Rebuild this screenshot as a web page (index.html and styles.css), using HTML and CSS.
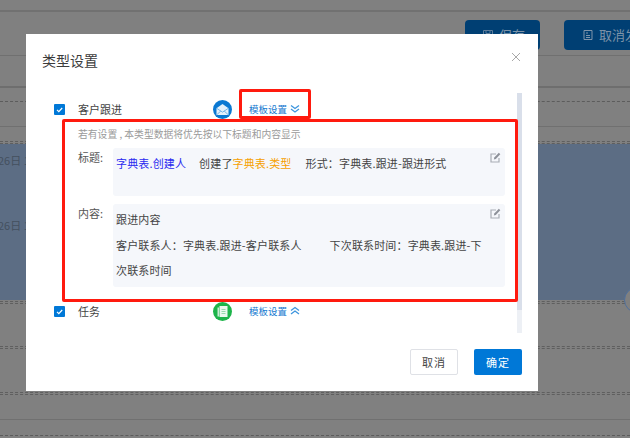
FILE: index.html
```html
<!DOCTYPE html>
<html lang="zh">
<head>
<meta charset="utf-8">
<title>类型设置</title>
<link rel="stylesheet" href="styles.css">
</head>
<body>
<div class="page">
  <div class="bg-row r1"></div>
  <div class="bg-row r2">
    <div class="bg-btn b1"><svg class="bg-ico" viewBox="0 0 12 12"><path d="M1.500 1.500h9v9h-9zM4 1.500v3h4v-3" fill="none" stroke="#5f7d9a" stroke-width="1"/></svg><span>保存</span></div>
    <div class="bg-btn b2"><svg class="bg-ico" viewBox="0 0 12 12"><path d="M2 1.500h8v9H2zM4 4h2M4 6.500h4M4 8.500h4" fill="none" stroke="#7f95ab" stroke-width="1"/></svg><span>取消发布</span></div>
  </div>
  <div class="bg-row r3"></div>
  <div class="bg-row r4"></div>
  <div class="bg-row r5"></div>
  <div class="bg-row r6"></div>
  <div class="dbl"></div>
  <div class="band">
    <div class="band-date d1">26日 1</div>
    <div class="band-date d2">26日 1</div>
    <div class="band-round"></div>
  </div>
  <div class="dbl after-band"></div>
  <div class="gap g42"></div>
  <div class="dbl"></div>
  <div class="gap g43"></div>
  <div class="dbl"></div>
  <div class="bg-row r9"></div>
  <div class="bg-row r10"></div>

  <div class="modal">
    <header class="modal-head">
      <h1 class="modal-title">类型设置</h1>
      <svg class="close" viewBox="0 0 10 10"><path d="M1 1l8 8M9 1l-8 8" stroke="#a9a9a9" stroke-width="1" fill="none"/></svg>
    </header>
    <div class="scroll">
      <div class="type-row first">
        <span class="check"><svg viewBox="0 0 11 11"><path d="M3 5.800l1.800 1.800L8.200 4" fill="none" stroke="#fff" stroke-width="1.200"/></svg></span>
        <span class="type-name">客户跟进</span>
        <span class="badge blue"><svg viewBox="0 0 19 19"><path d="M3.500 8.200L9.500 4 15.500 8.200V15h-12z" fill="#e3f0fb"/><path d="M3.500 8.200l6 4 6-4M3.500 15l4.300-4M15.500 15l-4.300-4" fill="none" stroke="#5aa6e3" stroke-width=".8"/></svg></span>
        <a class="tpl-link">模板设置<svg viewBox="0 0 10 10"><path d="M1 1.500l4 3 4-3M1 5l4 3 4-3" fill="none" stroke="#3d95de" stroke-width="1.300"/></svg></a>
      </div>
      <div class="panel">
        <p class="hint">若有设置 , 本类型数据将优先按以下标题和内容显示</p>
        <div class="field">
          <span class="field-label">标题:</span>
          <div class="field-box title-box">
            <span class="v-blue">字典表.创建人</span><span class="gap1">创建了</span><span class="v-orange">字典表.类型</span><span class="gap2">形式<span class="colon">：</span>字典表.跟进-跟进形式</span>
            <svg class="edit" viewBox="0 0 11 11"><path d="M9 6v4H1V2h5" fill="none" stroke="#a9adb5" stroke-width="1.200"/><path d="M3.800 7.500l.5-2L8.800.8l1.500 1.500-4.500 4.700z" fill="#8e929a"/></svg>
          </div>
        </div>
        <div class="field">
          <span class="field-label">内容:</span>
          <div class="field-box content-box">
            <div>跟进内容</div>
            <div>客户联系人<span class="colon">：</span>字典表.跟进-客户联系人<span class="gap3">下次联系时间<span class="colon">：</span>字典表.跟进-下次联系时间</span></div>
            <svg class="edit" viewBox="0 0 11 11"><path d="M9 6v4H1V2h5" fill="none" stroke="#a9adb5" stroke-width="1.200"/><path d="M3.800 7.500l.5-2L8.800.8l1.500 1.500-4.500 4.700z" fill="#8e929a"/></svg>
          </div>
        </div>
      </div>
      <div class="type-row second">
        <span class="check"><svg viewBox="0 0 11 11"><path d="M3 5.800l1.800 1.800L8.200 4" fill="none" stroke="#fff" stroke-width="1.200"/></svg></span>
        <span class="type-name">任务</span>
        <span class="badge green"><svg viewBox="0 0 19 19"><path d="M4.500 5.500h1.500v9H4.500z" fill="#c9ecd3"/><path d="M6.500 4h8v11h-8z" fill="#eaf8ee"/><path d="M8.500 7.500h4M8.500 9.500h4M8.500 11.500h4" stroke="#7fd39a" stroke-width=".8"/></svg></span>
        <a class="tpl-link">模板设置<svg viewBox="0 0 10 10"><path d="M1 4.500l4-3 4 3M1 8l4-3 4 3" fill="none" stroke="#3d95de" stroke-width="1.300"/></svg></a>
      </div>
      <div class="scrollbar"><div class="thumb"></div></div>
    </div>
    <footer class="modal-foot">
      <button class="btn cancel">取消</button>
      <button class="btn ok">确定</button>
    </footer>
  </div>

  <div class="mark mark-link"></div>
  <div class="mark mark-panel"></div>
</div>
</body>
</html>
```
FILE: styles.css
```css
* { box-sizing: border-box; }
html, body { margin: 0; padding: 0; }
body {
  width: 630px; height: 438px; overflow: hidden;
  font-family: "Noto Sans CJK SC", "Noto Sans", sans-serif;
  font-size: 11px; color: #444; background: #808080;
}
.page { position: relative; width: 630px; height: 438px; overflow: hidden; background: #808080; }

.bg-row { border-bottom: 1px solid #707070; }
.r1 { height: 12px; border-bottom-width: 2px; border-color: #717171; }
.r2 { height: 44px; position: relative; }
.r3 { height: 32px; border-bottom-width: 2px; border-color: #6e6e6e; }
.r4 { height: 14px; border-bottom: 1px dashed #5c5c5c; }
.r5 { height: 25px; }
.r6 { height: 14px; border: 0; }
.dbl { height: 3px; border-top: 1px dashed #5f5f5f; border-bottom: 1px dashed #5f5f5f; }
.band { height: 156px; background: #5c6d84; position: relative; }
.after-band { margin-top: 1px; }
.g42 { height: 42px; }
.g43 { height: 43px; }
.r9 { height: 25px; }
.r10 { height: 16px; border-bottom: 1px dashed #5c5c5c; }

.bg-btn {
  position: absolute; top: 8px; height: 30px; border-radius: 4px; background: #003f73;
  color: #7d93a8; font-size: 13px; line-height: 18px; display: flex; align-items: center; white-space: nowrap;
}
.b1 { left: 465px; width: 75px; padding-left: 17px; }
.b2 { left: 564px; width: 90px; padding-left: 18px; }
.bg-ico { width: 12px; height: 12px; margin-right: 5px; flex: none; }

.band-date { position: absolute; left: -2px; color: #44505f; font-size: 11px; line-height: 14px; }
.d1 { top: 9px; }
.d2 { top: 74px; }
.band-round {
  position: absolute; left: 624px; top: 143px; width: 26px; height: 26px; border-radius: 50%;
  background: #808080; border: 1px solid #4f6f9c;
}

.modal {
  position: absolute; left: 26px; top: 34px; width: 512px; height: 357px;
  background: #fff; display: flex; flex-direction: column;
}
.modal-head { height: 59px; padding: 16px 16px 0; display: flex; justify-content: space-between; align-items: flex-start; }
.modal-title { margin: 0; font-size: 14px; font-weight: 400; line-height: 20px; color: #3c3c3c; }
.close { width: 10px; height: 10px; margin: 2px 1px 0 0; }

.scroll { position: relative; margin-left: 28px; width: 468px; height: 240px; }
.type-row { height: 18px; display: flex; align-items: center; line-height: 18px; }
.first { margin-top: 7px; }
.second { margin-top: 8px; }
.check { width: 11px; height: 11px; background: #0078d7; border-radius: 1px; flex: none; display: flex; }
.check svg { width: 11px; height: 11px; }
.type-name { margin-left: 13px; width: 135px; flex: none; color: #444; }
.badge { width: 19px; height: 19px; border-radius: 50%; flex: none; }
.badge svg { display: block; width: 19px; height: 19px; }
.blue { background: #0a78d2; }
.green { background: #1db44a; }
.tpl-link {
  margin-left: 17px; font-size: 9.500px; color: #1579d0; display: flex; align-items: center; white-space: nowrap;
}
.tpl-link svg { width: 10px; height: 10px; margin-left: 3px; }

.panel { padding: 9px 0 0 24px; height: 176px; }
.hint { margin: 0; height: 14px; font-size: 9.800px; line-height: 14px; color: #9a9a9a; }
.field { display: flex; align-items: flex-start; }
.field + .field { margin-top: 8px; }
.hint + .field { margin-top: 7px; }
.field-label { width: 35px; flex: none; line-height: 18px; color: #555; }
.field-box {
  position: relative; width: 392px; background: #f5f7fb; border-radius: 3px;
  padding: 3px 16px 0 3px; line-height: 25.500px; color: #444; letter-spacing: .15px;
}
.title-box { height: 48px; }
.content-box { height: 83px; }
.colon { font-family: "Noto Sans CJK TC", sans-serif; }
.v-blue { color: #2a2af0; }
.v-orange { color: #f5a000; }
.gap1 { margin-left: 13px; }
.gap2 { margin-left: 14px; }
.gap3 { margin-left: 28px; }
.edit { position: absolute; right: 4px; top: 4px; width: 11px; height: 11px; }

.scrollbar { position: absolute; left: 463px; top: 0; width: 5px; height: 240px; background: #edf0f5; }
.thumb { height: 217px; background: #d9dfea; }

.modal-foot { display: flex; justify-content: flex-end; gap: 16px; padding: 16px 16px 0 0; }
.btn { width: 48px; height: 26px; border-radius: 2px; font: 11px "Noto Sans CJK SC", sans-serif; letter-spacing: 1px; padding: 0; }
.cancel { background: #fff; border: 1px solid #dfe1e6; color: #444; }
.ok { background: #0078d7; border: 0; color: #fff; }

.mark { position: absolute; border: 3px solid #ff1a0e; border-radius: 2px; }
.mark-link { left: 239px; top: 89px; width: 72px; height: 30px; }
.mark-panel { left: 62px; top: 119px; width: 456px; height: 183px; }
```
